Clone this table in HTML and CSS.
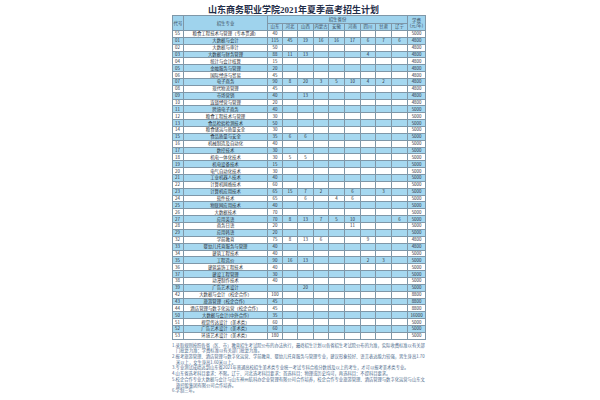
FILE: index.html
```html
<!DOCTYPE html>
<html lang="zh">
<head>
<meta charset="utf-8">
<title>山东商务职业学院2021年夏季高考招生计划</title>
<link rel="stylesheet" href="styles.css">
</head>
<body>
<div class="page">
  <h1 class="title">山东商务职业学院2021年夏季高考招生计划</h1>
  <table class="plan">
    <colgroup>
      <col class="c-code"><col class="c-major">
      <col class="c-p15"><col class="c-p15"><col class="c-p16"><col class="c-p15"><col class="c-p16"><col class="c-p16"><col class="c-p15"><col class="c-p16"><col class="c-p16">
      <col class="c-fee">
    </colgroup>
    <thead>
      <tr class="h1"><th rowspan="2">代号</th><th rowspan="2">招生专业</th><th colspan="9">招生省份</th><th rowspan="2" class="fee-h">学费<br>(元/年)</th></tr>
      <tr class="h2"><th>山东</th><th>河北</th><th>山西</th><th>内蒙古</th><th>安徽</th><th>河南</th><th>四川</th><th>甘肃</th><th>辽宁</th></tr>
    </thead>
    <tbody>
      <tr><td class="code">55</td><td>粮食工程技术与管理（专本贯通）</td><td>40</td><td></td><td></td><td></td><td></td><td></td><td></td><td></td><td></td><td>5000</td></tr>
      <tr><td class="code">01</td><td>大数据与会计</td><td>115</td><td>45</td><td>19</td><td>16</td><td>16</td><td>17</td><td>6</td><td>7</td><td>6</td><td>4800</td></tr>
      <tr><td class="code">02</td><td>大数据与审计</td><td>50</td><td></td><td></td><td></td><td></td><td></td><td></td><td></td><td></td><td>4800</td></tr>
      <tr><td class="code">03</td><td>大数据与财务管理</td><td>88</td><td>11</td><td>13</td><td></td><td></td><td></td><td>4</td><td></td><td></td><td>4800</td></tr>
      <tr><td class="code">04</td><td>统计与会计核算</td><td>15</td><td></td><td></td><td></td><td></td><td></td><td></td><td></td><td></td><td>4800</td></tr>
      <tr><td class="code">05</td><td>金融服务与管理</td><td>20</td><td></td><td></td><td></td><td></td><td></td><td></td><td></td><td></td><td>4800</td></tr>
      <tr><td class="code">06</td><td>国际经济与贸易</td><td>45</td><td></td><td></td><td></td><td></td><td></td><td></td><td></td><td></td><td>4800</td></tr>
      <tr><td class="code">07</td><td>电子商务</td><td>90</td><td>8</td><td>20</td><td>3</td><td>5</td><td>10</td><td>4</td><td>2</td><td></td><td>4800</td></tr>
      <tr><td class="code">08</td><td>现代物流管理</td><td>45</td><td></td><td></td><td></td><td></td><td></td><td></td><td></td><td></td><td>4800</td></tr>
      <tr><td class="code">09</td><td>市场营销</td><td>40</td><td></td><td>13</td><td></td><td></td><td></td><td></td><td></td><td></td><td>4800</td></tr>
      <tr><td class="code">10</td><td>连锁经营与管理</td><td>20</td><td></td><td></td><td></td><td></td><td></td><td></td><td></td><td></td><td>4800</td></tr>
      <tr><td class="code">11</td><td>跨境电子商务</td><td>40</td><td></td><td></td><td></td><td></td><td></td><td></td><td></td><td></td><td>5000</td></tr>
      <tr><td class="code">12</td><td>粮食工程技术与管理</td><td>30</td><td></td><td></td><td></td><td></td><td></td><td></td><td></td><td></td><td>5000</td></tr>
      <tr><td class="code">13</td><td>食品检验检测技术</td><td>50</td><td></td><td></td><td></td><td></td><td></td><td></td><td></td><td></td><td>5000</td></tr>
      <tr><td class="code">14</td><td>粮食储运与质量安全</td><td>30</td><td></td><td></td><td></td><td></td><td></td><td></td><td></td><td></td><td>5000</td></tr>
      <tr><td class="code">15</td><td>食品质量与安全</td><td>35</td><td>6</td><td>6</td><td></td><td></td><td></td><td></td><td></td><td></td><td>5000</td></tr>
      <tr><td class="code">16</td><td>机械制造及自动化</td><td>40</td><td></td><td></td><td></td><td></td><td></td><td></td><td></td><td></td><td>5000</td></tr>
      <tr><td class="code">17</td><td>数控技术</td><td>30</td><td></td><td></td><td></td><td></td><td></td><td></td><td></td><td></td><td>5000</td></tr>
      <tr><td class="code">18</td><td>机电一体化技术</td><td>30</td><td>5</td><td>5</td><td></td><td></td><td></td><td></td><td></td><td></td><td>5000</td></tr>
      <tr><td class="code">19</td><td>机电设备技术</td><td>15</td><td></td><td></td><td></td><td></td><td></td><td></td><td></td><td></td><td>5000</td></tr>
      <tr><td class="code">20</td><td>电气自动化技术</td><td>30</td><td></td><td></td><td></td><td></td><td></td><td></td><td></td><td></td><td>5000</td></tr>
      <tr><td class="code">21</td><td>工业机器人技术</td><td>40</td><td></td><td></td><td></td><td></td><td></td><td></td><td></td><td></td><td>5000</td></tr>
      <tr><td class="code">22</td><td>计算机网络技术</td><td>60</td><td></td><td></td><td></td><td></td><td></td><td></td><td></td><td></td><td>5000</td></tr>
      <tr><td class="code">23</td><td>计算机应用技术</td><td>65</td><td>15</td><td>7</td><td>2</td><td></td><td>6</td><td></td><td>3</td><td></td><td>5000</td></tr>
      <tr><td class="code">24</td><td>软件技术</td><td>65</td><td></td><td>6</td><td></td><td>4</td><td>6</td><td></td><td></td><td></td><td>5000</td></tr>
      <tr><td class="code">25</td><td>物联网应用技术</td><td>40</td><td></td><td></td><td></td><td></td><td></td><td></td><td></td><td></td><td>5000</td></tr>
      <tr><td class="code">26</td><td>大数据技术</td><td>70</td><td></td><td></td><td></td><td></td><td></td><td></td><td></td><td></td><td>5000</td></tr>
      <tr><td class="code">27</td><td>应用英语</td><td>70</td><td>8</td><td>13</td><td>7</td><td>5</td><td>10</td><td></td><td></td><td>6</td><td>5000</td></tr>
      <tr><td class="code">28</td><td>商务日语</td><td>20</td><td></td><td></td><td></td><td></td><td>11</td><td></td><td></td><td></td><td>5000</td></tr>
      <tr><td class="code">29</td><td>应用韩语</td><td>20</td><td></td><td></td><td></td><td></td><td></td><td></td><td></td><td></td><td>5000</td></tr>
      <tr><td class="code">32</td><td>学前教育</td><td>75</td><td>8</td><td>13</td><td>6</td><td></td><td></td><td>9</td><td></td><td></td><td>4800</td></tr>
      <tr><td class="code">33</td><td>婴幼儿托育服务与管理</td><td>40</td><td></td><td></td><td></td><td></td><td></td><td></td><td></td><td></td><td>4800</td></tr>
      <tr><td class="code">34</td><td>建筑工程技术</td><td>40</td><td></td><td></td><td></td><td></td><td></td><td></td><td></td><td></td><td>5000</td></tr>
      <tr><td class="code">35</td><td>工程造价</td><td>90</td><td>16</td><td>13</td><td></td><td></td><td></td><td>2</td><td>3</td><td></td><td>5000</td></tr>
      <tr><td class="code">36</td><td>建筑装饰工程技术</td><td>40</td><td></td><td></td><td></td><td></td><td></td><td></td><td></td><td></td><td>5000</td></tr>
      <tr><td class="code">37</td><td>建设工程管理</td><td>30</td><td></td><td></td><td></td><td></td><td></td><td></td><td></td><td></td><td>5000</td></tr>
      <tr><td class="code">38</td><td>动漫制作技术</td><td>40</td><td></td><td></td><td></td><td></td><td></td><td></td><td></td><td></td><td>5000</td></tr>
      <tr><td class="code">39</td><td>广告艺术设计</td><td></td><td></td><td>20</td><td></td><td></td><td></td><td></td><td></td><td></td><td>5000</td></tr>
      <tr><td class="code">42</td><td>大数据与会计（校企合作）</td><td>100</td><td></td><td></td><td></td><td></td><td></td><td></td><td></td><td></td><td>8800</td></tr>
      <tr><td class="code">43</td><td>旅游管理（校企合作）</td><td>45</td><td></td><td></td><td></td><td></td><td></td><td></td><td></td><td></td><td>8800</td></tr>
      <tr><td class="code">44</td><td>酒店管理与数字化运营（校企合作）</td><td>45</td><td></td><td></td><td></td><td></td><td></td><td></td><td></td><td></td><td>8800</td></tr>
      <tr><td class="code">50</td><td>大数据与会计(中外合作)</td><td>35</td><td></td><td></td><td></td><td></td><td></td><td></td><td></td><td></td><td>16000</td></tr>
      <tr><td class="code">51</td><td>视觉传达设计（美术类）</td><td>60</td><td></td><td></td><td></td><td></td><td></td><td></td><td></td><td></td><td>5000</td></tr>
      <tr><td class="code">52</td><td>广告艺术设计（美术类）</td><td>60</td><td></td><td></td><td></td><td></td><td></td><td></td><td></td><td></td><td>5000</td></tr>
      <tr><td class="code">53</td><td>环境艺术设计（美术类）</td><td>180</td><td></td><td></td><td></td><td></td><td></td><td></td><td></td><td></td><td>5000</td></tr>
    </tbody>
  </table>
  <ol class="notes">
    <li>1.录取规则按照各省（区、市）教育招生考试院公布的办法执行，最终招生计划以各省招生考试院公布的为准，实际收费标准以有关部门批复为准；学费标准以有关部门批复为准。</li>
    <li>2.报考旅游管理、酒店管理与数字化运营、学前教育、婴幼儿托育服务与管理专业，建议形象较好、语言表达能力较强，男生身高1.70米以上，女生身高1.60米以上。</li>
    <li>3.专业测试成绩达到山东省2021年普通高校招生美术类专业统一考试专科合格分数线及以上的考生，才可以报考美术类专业。</li>
    <li>4.山东省选考科目要求：不限。辽宁、河北选考科目要求：首选科目：物理或历史均可，再选科目：不提科目要求。</li>
    <li>5.校企合作专业大数据与会计与山东神州航科办企业管理有限公司合作培养，校企合作专业旅游管理、酒店管理与数字化运营与山东文旅控股集团有限公司合作培养。</li>
    <li>6.学制三年。</li>
  </ol>
</div>
</body>
</html>
```
FILE: styles.css
```css
html, body {
  margin: 0;
  padding: 0;
  background: #ffffff;
}
body {
  font-family: "Noto Sans CJK SC", "Liberation Sans", sans-serif;
  color: #2b2f36;
}
.page {
  width: 253px;
  margin-left: 172px;
  padding-top: 5px;
}
.title {
  margin: 0 0 0 36px;
  font-family: "Liberation Serif", "Noto Sans CJK SC", serif;
  font-size: 9px;
  line-height: 10px;
  font-weight: bold;
  color: #1f2d48;
  white-space: nowrap;
}
.plan {
  border-collapse: collapse;
  table-layout: fixed;
  width: 253px;
  font-size: 4.4px;
  line-height: 5px;
  color: #2a2f38;
}
.c-code { width: 11px; }
.c-major { width: 84px; }
.c-p15 { width: 15px; }
.c-p16 { width: 16px; }
.c-fee { width: 18px; }
.plan th,
.plan td {
  border: 1px solid #7f97a8;
  padding: 0;
  text-align: center;
  vertical-align: middle;
  white-space: nowrap;
  overflow: hidden;
}
.plan th {
  background: #9fd3ed;
  font-weight: normal;
  color: #3a4a5a;
}
.plan .h1 { height: 7.5px; }
.plan .h2 { height: 7.5px; }
.plan .fee-h { line-height: 4.6px; }
.plan tbody tr {
  height: 6.86px;
}
.plan tbody tr:nth-child(even) td {
  background: #a6d8f0;
}
.plan td.code {
  text-align: left;
  padding-left: 2px;
}
.notes {
  list-style: none;
  margin: 3px 0 0 0;
  padding: 0;
  font-size: 4.3px;
  line-height: 5.7px;
  color: #4d6b8c;
}
.notes li {
  padding-left: 4px;
  text-indent: -4px;
}
```
